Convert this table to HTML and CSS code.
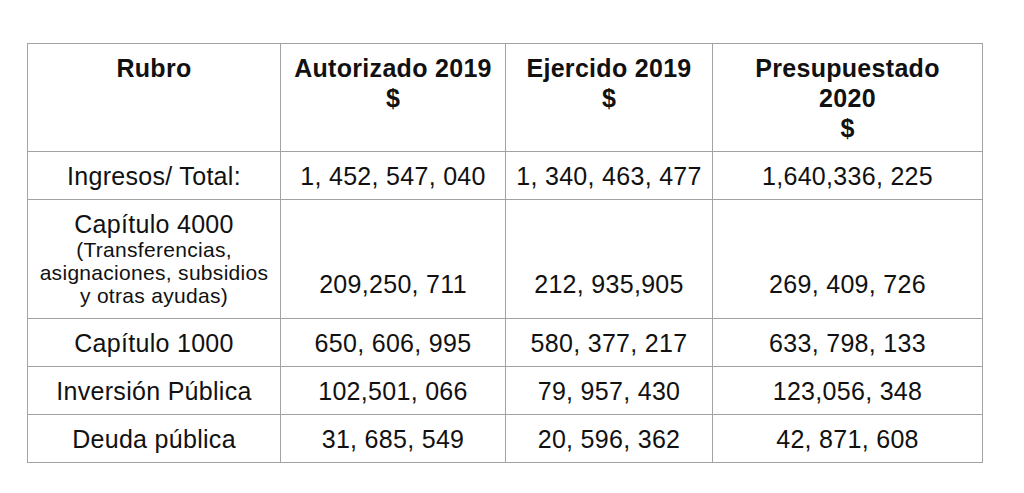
FILE: index.html
```html
<!DOCTYPE html>
<html lang="es">
<head>
<meta charset="utf-8">
<title>Presupuesto</title>
<link rel="stylesheet" href="styles.css">
</head>
<body>
<table class="budget">
  <colgroup>
    <col class="c1"><col class="c2"><col class="c3"><col class="c4">
  </colgroup>
  <thead>
    <tr>
      <th>Rubro</th>
      <th>Autorizado 2019<br>$</th>
      <th>Ejercido 2019<br>$</th>
      <th>Presupuestado<br>2020<br>$</th>
    </tr>
  </thead>
  <tbody>
    <tr>
      <td>Ingresos/ Total:</td>
      <td>1, 452, 547, 040</td>
      <td>1, 340, 463, 477</td>
      <td>1,640,336, 225</td>
    </tr>
    <tr class="tall">
      <td class="label"><span class="main">Capítulo 4000</span><span class="note">(Transferencias,<br>asignaciones, subsidios<br>y otras ayudas)</span></td>
      <td class="low">209,250, 711</td>
      <td class="low">212, 935,905</td>
      <td class="low">269, 409, 726</td>
    </tr>
    <tr>
      <td>Capítulo 1000</td>
      <td>650, 606, 995</td>
      <td>580, 377, 217</td>
      <td>633, 798, 133</td>
    </tr>
    <tr>
      <td>Inversión Pública</td>
      <td>102,501, 066</td>
      <td>79, 957, 430</td>
      <td>123,056, 348</td>
    </tr>
    <tr>
      <td>Deuda pública</td>
      <td>31, 685, 549</td>
      <td>20, 596, 362</td>
      <td>42, 871, 608</td>
    </tr>
  </tbody>
</table>
</body>
</html>
```
FILE: styles.css
```css
html, body {
  margin: 0;
  padding: 0;
  background: #ffffff;
}

body {
  font-family: "Liberation Sans", Arial, sans-serif;
  color: #111111;
}

.budget {
  margin: 43px 0 0 27px;
  border-collapse: collapse;
  table-layout: fixed;
  width: 955px;
  letter-spacing: 0.3px;
}

.c1 { width: 253px; }
.c2 { width: 225px; }
.c3 { width: 207px; }
.c4 { width: 270px; }

.budget th,
.budget td {
  border: 1px solid #a3a3a3;
  text-align: center;
  font-size: 25px;
  padding: 10px 4px 9px;
  line-height: 28px;
}

.budget th {
  font-weight: 700;
  vertical-align: top;
  line-height: 30px;
  padding: 9px 4px 8px;
}

.budget td {
  font-weight: 400;
  vertical-align: middle;
}

.budget td.label {
  padding: 10px 4px 11px;
  vertical-align: top;
}

.main {
  display: block;
  line-height: 28px;
}

.note {
  display: block;
  font-size: 21px;
  line-height: 23px;
}

.budget td.low {
  vertical-align: bottom;
  padding-bottom: 20px;
}
```
